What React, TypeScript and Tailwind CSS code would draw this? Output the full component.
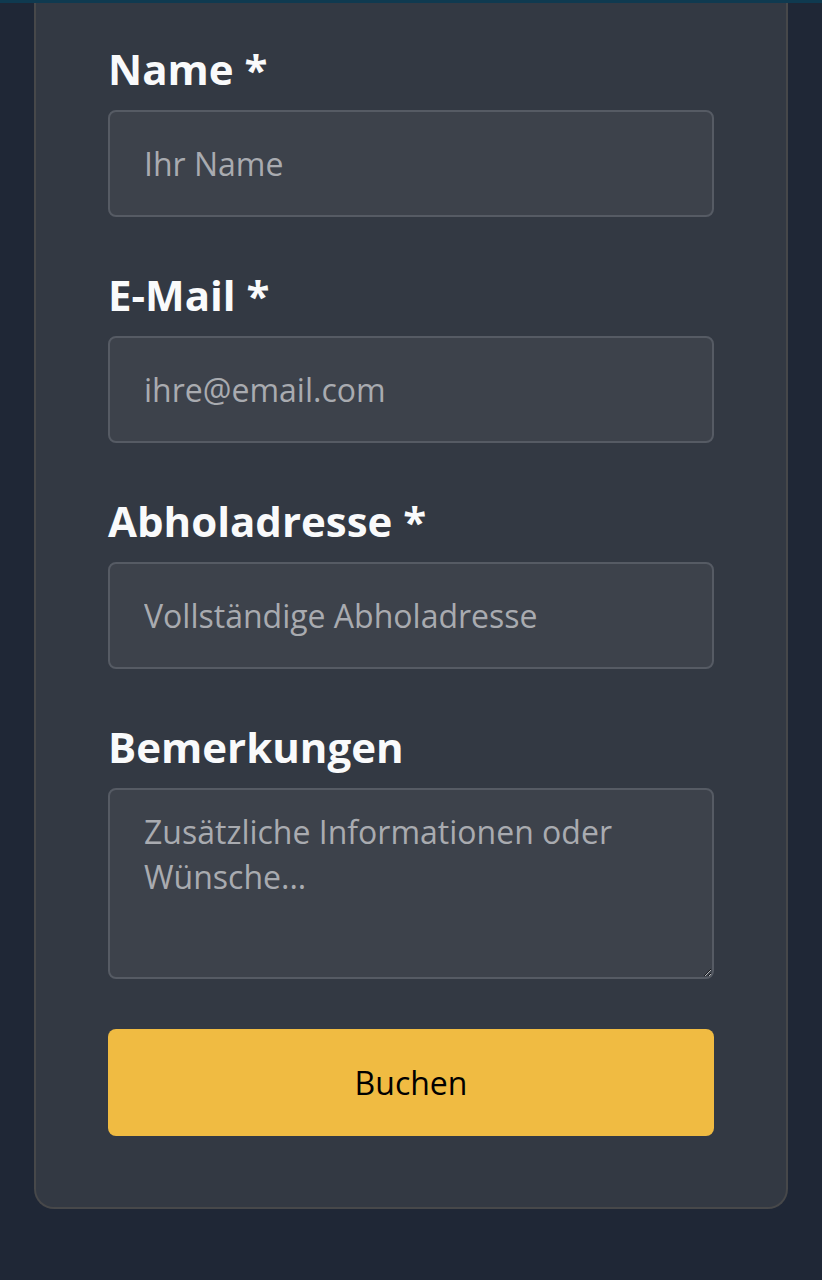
import React from "react";

const fields = [
  { label: "Name *", placeholder: "Ihr Name", type: "text" },
  { label: "E-Mail *", placeholder: "ihre@email.com", type: "email" },
  { label: "Abholadresse *", placeholder: "Vollständige Abholadresse", type: "text" },
];

export default function App() {
  return (
    <div
      className="min-h-[1280px] bg-[#1f2736]"
      style={{ fontFamily: '"Open Sans", "Liberation Sans", sans-serif' }}
    >
      <div className="h-[3px] bg-[#0f3a50]" />
      <div className="px-[34px]">
        <form
          className="flex flex-col rounded-b-[20px] border-x-2 border-b-2 border-[#47484a] bg-[#333943] px-[72px] pt-[38px] pb-[71px]"
          onSubmit={(e) => e.preventDefault()}
        >
          {fields.map((f) => (
            <div key={f.label} className="mb-[50px] flex flex-col">
              <label className="mb-[13px] block text-[42px] font-bold leading-[56px] text-[#f9fafb]">
                {f.label}
              </label>
              <input
                type={f.type}
                placeholder={f.placeholder}
                className="h-[107px] w-full rounded-lg border-2 border-[#565b64] bg-[#3d424b] px-[34px] text-[32px] leading-[45px] text-white outline-none placeholder:text-[#a9abb0]"
              />
            </div>
          ))}
          <div className="mb-[50px] flex flex-col">
            <label className="mb-[13px] block text-[42px] font-bold leading-[56px] text-[#f9fafb]">
              Bemerkungen
            </label>
            <textarea
              placeholder="Zusätzliche Informationen oder Wünsche..."
              className="block h-[191px] w-full rounded-lg border-2 border-[#565b64] bg-[#3d424b] px-[34px] pt-[19px] text-[32px] leading-[45px] text-white outline-none placeholder:text-[#a9abb0]"
            />
          </div>
          <button
            type="submit"
            className="h-[107px] w-full rounded-lg bg-[#f0bb42] text-[32px] text-black"
          >
            Buchen
          </button>
        </form>
      </div>
    </div>
  );
}
